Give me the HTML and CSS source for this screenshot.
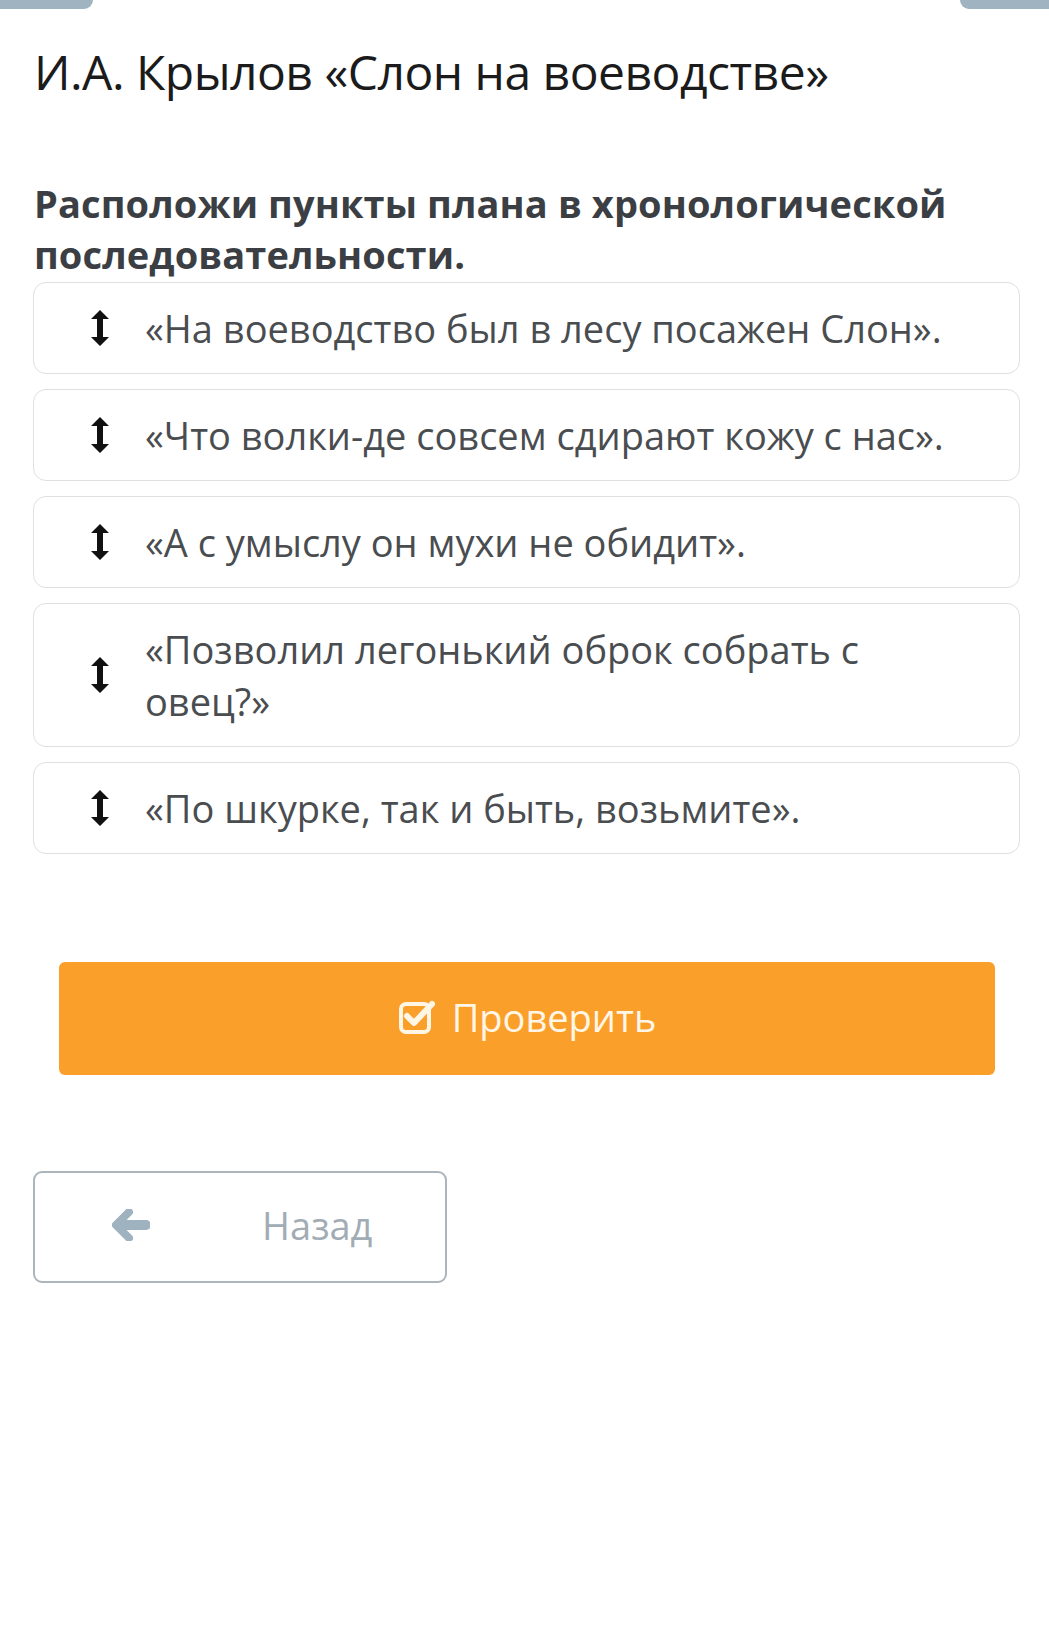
FILE: index.html
```html
<!DOCTYPE html>
<html lang="ru">
<head>
<meta charset="utf-8">
<link rel="stylesheet" href="styles.css">
</head>
<body>
<div class="tabs"><span class="tab tab-left"></span><span class="tab tab-right"></span></div>
<main class="page">
  <h1 class="title">И.А. Крылов «Слон на воеводстве»</h1>
  <h2 class="question">Расположи пункты плана в хронологической последовательности.</h2>
  <ul class="items">
    <li class="item"><svg class="drag" viewBox="0 0 18 36"><path d="M9 0 L18 9 L12 9 L12 27 L18 27 L9 36 L0 27 L6 27 L6 9 L0 9 Z"/></svg><span class="item-text">«На воеводство был в лесу посажен Слон».</span></li>
    <li class="item"><svg class="drag" viewBox="0 0 18 36"><path d="M9 0 L18 9 L12 9 L12 27 L18 27 L9 36 L0 27 L6 27 L6 9 L0 9 Z"/></svg><span class="item-text">«Что волки-де совсем сдирают кожу с нас».</span></li>
    <li class="item"><svg class="drag" viewBox="0 0 18 36"><path d="M9 0 L18 9 L12 9 L12 27 L18 27 L9 36 L0 27 L6 27 L6 9 L0 9 Z"/></svg><span class="item-text">«А с умыслу он мухи не обидит».</span></li>
    <li class="item"><svg class="drag" viewBox="0 0 18 36"><path d="M9 0 L18 9 L12 9 L12 27 L18 27 L9 36 L0 27 L6 27 L6 9 L0 9 Z"/></svg><span class="item-text">«Позволил легонький оброк собрать с овец?»</span></li>
    <li class="item"><svg class="drag" viewBox="0 0 18 36"><path d="M9 0 L18 9 L12 9 L12 27 L18 27 L9 36 L0 27 L6 27 L6 9 L0 9 Z"/></svg><span class="item-text">«По шкурке, так и быть, возьмите».</span></li>
  </ul>
  <div class="check-wrap">
    <button class="check-btn"><svg class="check-icon" viewBox="0 0 40 36"><rect x="3" y="5" width="28" height="28" rx="5" fill="none" stroke="currentColor" stroke-width="4"/><path d="M9 17 L16 24 L34 5" fill="none" stroke="currentColor" stroke-width="6" stroke-linecap="round" stroke-linejoin="round"/></svg><span>Проверить</span></button>
  </div>
  <div class="nav">
    <button class="back-btn"><svg class="back-icon" viewBox="0 0 38 32"><path d="M17 3 L4 16 L17 29" fill="none" stroke="currentColor" stroke-width="8" stroke-linecap="round" stroke-linejoin="round"/><path d="M6 16 L34 16" fill="none" stroke="currentColor" stroke-width="10" stroke-linecap="round"/></svg><span>Назад</span></button>
  </div>
</main>
</body>
</html>
```
FILE: styles.css
```css
* { box-sizing: border-box; }
html, body { margin: 0; padding: 0; background: #fff; }
body { font-family: "Open Sans", "Noto Sans", sans-serif; color: #444; width: 1049px; }

.tabs { display: flex; justify-content: space-between; height: 9px; }
.tab { display: block; background: #9fb3c0; height: 9px; }
.tab-left { width: 93px; border-bottom-right-radius: 10px; }
.tab-right { width: 89px; border-bottom-left-radius: 10px; }

.page { padding: 0 29px 0 33px; }

.title {
  margin: 31px 0 0 1px;
  font-size: 48px;
  font-weight: 400;
  line-height: 64px;
  color: #1b1b1b;
  letter-spacing: -0.5px;
}

.question {
  margin: 74px 0 0 1px;
  font-size: 38px;
  font-weight: 700;
  line-height: 51px;
  color: #3b3f44;
  letter-spacing: 0.1px;
}

.items { list-style: none; margin: 2px 0 0; padding: 0; display: flex; flex-direction: column; gap: 15px; }
.item {
  display: flex;
  align-items: center;
  gap: 36px;
  min-height: 92px;
  padding: 19px 53px 19px 57px;
  border: 1.5px solid #e0e0e0;
  border-radius: 13px;
  background: #fff;
}
.drag { width: 18px; height: 36px; flex: none; fill: #111; }
.item-text { font-size: 38px; line-height: 52px; color: #4a4d50; }

.check-wrap { padding: 108px 25px 0 26px; }
.check-btn {
  width: 100%;
  height: 113px;
  border: none;
  border-radius: 6px;
  background: #fb9f2b;
  color: #fff6e6;
  display: flex;
  align-items: center;
  justify-content: center;
  gap: 14px;
  font-family: "Open Sans", sans-serif;
  font-size: 38px;
  padding: 0 0 4px 0;
}
.check-icon { width: 40px; height: 36px; }

.nav { padding-top: 96px; }
.back-btn {
  width: 414px;
  height: 112px;
  border: 2px solid #abb5bb;
  border-radius: 9px;
  background: #fff;
  color: #a2acb4;
  display: flex;
  align-items: center;
  padding: 0 0 4px 77px;
  gap: 112px;
  font-family: "Open Sans", sans-serif;
  font-size: 38px;
}
.back-icon { width: 38px; height: 32px; color: #9fb2bf; }
```
